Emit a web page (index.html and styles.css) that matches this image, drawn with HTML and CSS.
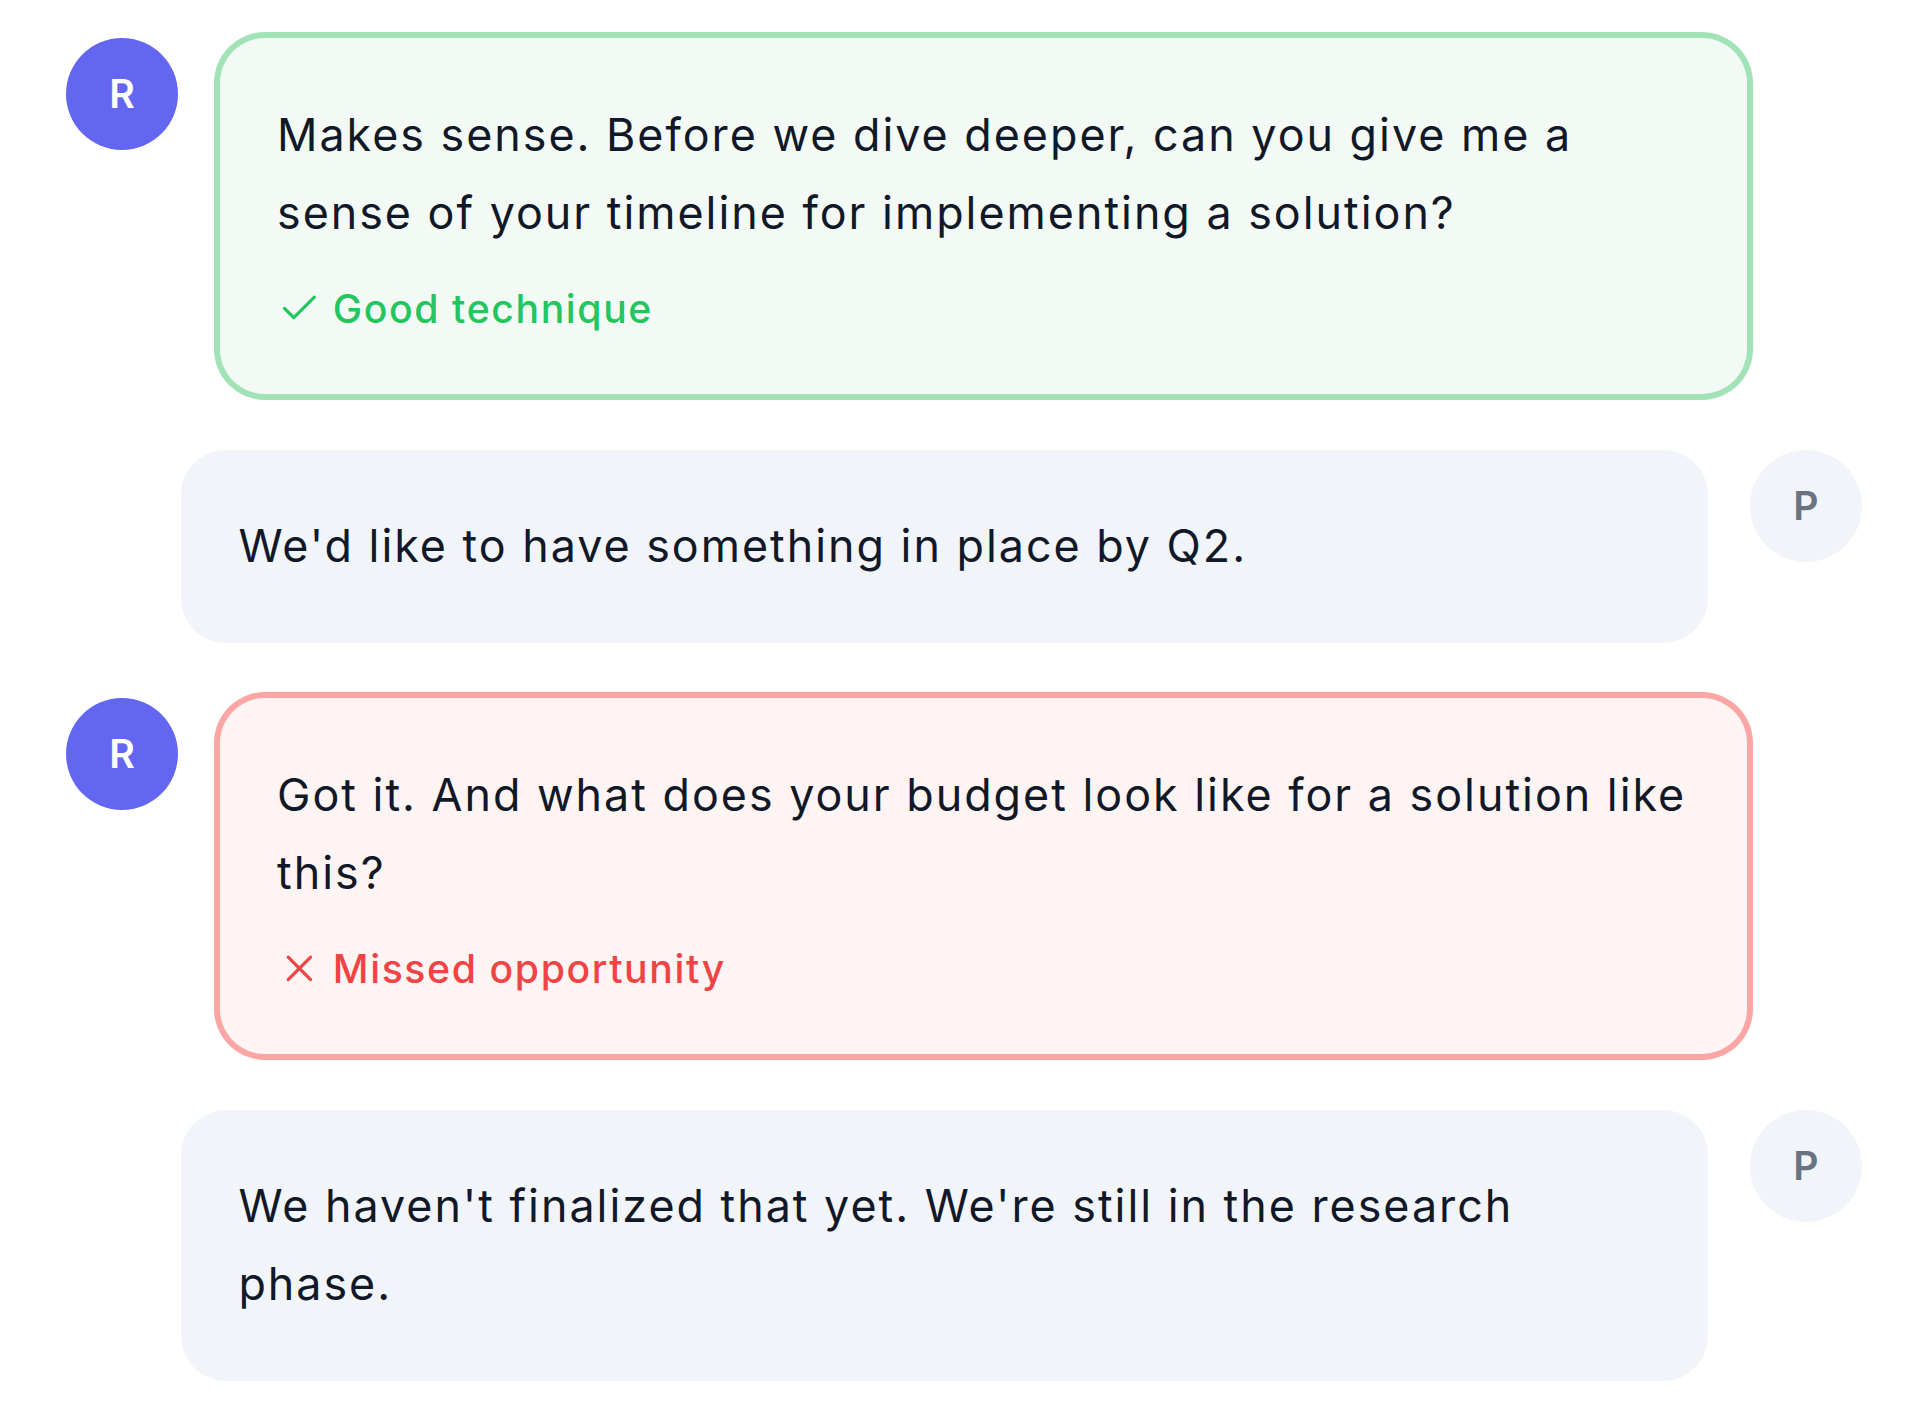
FILE: index.html
```html
<!DOCTYPE html>
<html lang="en">
<head>
<meta charset="utf-8">
<title>Conversation review</title>
<link rel="stylesheet" href="styles.css">
</head>
<body>
<div class="chat">
  <div class="row rep">
    <div class="avatar avatar-rep">R</div>
    <div class="bubble bubble-good">
      <p class="msg">Makes sense. Before we dive deeper, can you give me a sense of your timeline for implementing a solution?</p>
      <div class="label label-good">
        <svg viewBox="0 0 24 24" fill="none" stroke="currentColor" stroke-width="1.7" stroke-linecap="round" stroke-linejoin="round"><path d="M20 6 9 17l-5-5"/></svg>
        <span>Good technique</span>
      </div>
    </div>
  </div>
  <div class="row prospect">
    <div class="bubble bubble-prospect">
      <p class="msg">We'd like to have something in place by Q2.</p>
    </div>
    <div class="avatar avatar-prospect">P</div>
  </div>
  <div class="row rep">
    <div class="avatar avatar-rep">R</div>
    <div class="bubble bubble-missed">
      <p class="msg">Got it. And what does your budget look like for a solution like this?</p>
      <div class="label label-missed">
        <svg viewBox="0 0 24 24" fill="none" stroke="currentColor" stroke-width="1.7" stroke-linecap="round" stroke-linejoin="round"><path d="M18 6 6 18"/><path d="m6 6 12 12"/></svg>
        <span>Missed opportunity</span>
      </div>
    </div>
  </div>
  <div class="row prospect">
    <div class="bubble bubble-prospect">
      <p class="msg">We haven't finalized that yet. We're still in the research phase.</p>
    </div>
    <div class="avatar avatar-prospect">P</div>
  </div>
</div>
</body>
</html>
```

FILE: styles.css
```css
html, body {
  margin: 0;
  padding: 0;
  background: #ffffff;
}

body {
  font-family: "Inter", "Noto Sans", "Liberation Sans", sans-serif;
  color: #111827;
}

.chat {
  display: flex;
  flex-direction: column;
  gap: 55.5px;
  padding: 38px 46px 0 66px;
}

.row {
  display: flex;
  align-items: flex-start;
  gap: 42px;
}

.row.prospect {
  justify-content: flex-end;
}

.avatar {
  flex: 0 0 112px;
  width: 112px;
  height: 112px;
  border-radius: 50%;
  display: flex;
  align-items: center;
  justify-content: center;
  font-size: 39.2px;
  font-weight: 600;
  line-height: 1;
  letter-spacing: 0;
}

.avatar-rep {
  background: #6366f1;
  color: #ffffff;
}

.avatar-prospect {
  background: #f1f4f8;
  color: #6b7280;
}

.bubble {
  width: 85%;
  box-sizing: border-box;
  border-radius: 45px;
  padding: 57.5px 57px;
}

.bubble-good {
  background: #f3faf6;
  box-shadow: 0 0 0 6px #a1e3b6;
}

.bubble-missed {
  background: #fef4f4;
  box-shadow: 0 0 0 6px #fca5a5;
}

.bubble-prospect {
  background: #f1f4f8;
}

.msg {
  margin: 0;
  font-size: 44.8px;
  line-height: 78px;
  letter-spacing: 2px;
}

.label {
  display: flex;
  align-items: center;
  gap: 11px;
  margin-top: 29px;
  font-size: 39.2px;
  line-height: 56px;
  font-weight: 500;
  letter-spacing: 1.6px;
}

.label svg {
  width: 44.8px;
  height: 44.8px;
  flex: none;
}

.label-good {
  color: #22c55e;
}

.label-missed {
  color: #ef4444;
}
```
